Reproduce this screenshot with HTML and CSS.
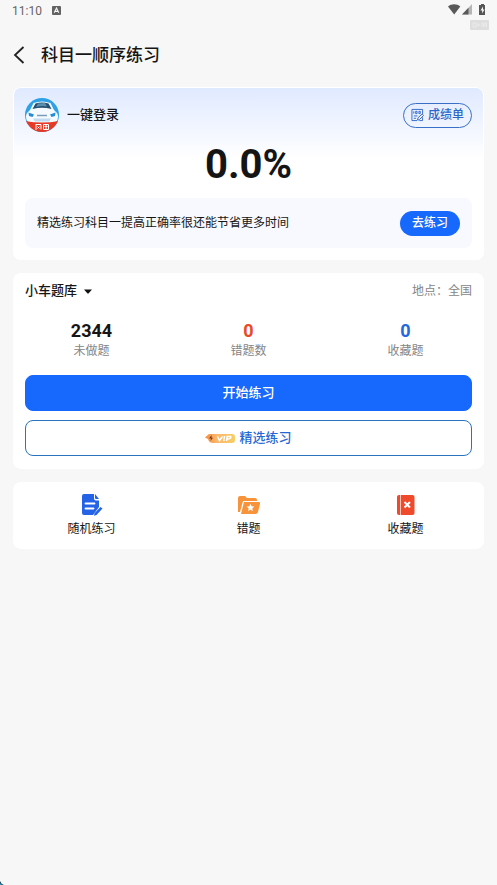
FILE: index.html
```html
<!DOCTYPE html>
<html lang="zh-CN">
<head>
<meta charset="utf-8">
<meta name="viewport" content="width=device-width, initial-scale=1">
<title>科目一顺序练习</title>
<link rel="stylesheet" href="styles.css">
</head>
<body>
<div class="status">
  <span class="time">11:10</span>
  <svg class="notice" width="9" height="9" viewBox="0 0 9 9" aria-hidden="true"><rect width="9" height="9" rx="1" fill="#636363"/><path d="M2.2 6.8 4.5 2l2.3 4.800M3.200 5.400h2.600" fill="none" stroke="#f7f7f7" stroke-width="1.100"/></svg>
  <div class="signals">
    <svg class="radio" width="38" height="11" viewBox="0 0 38 11" aria-hidden="true">
      <path d="M0 2.600C3.500-.5 8.800-.5 12.300 2.600L6.200 10.500Z" fill="#595959"/>
      <path d="M24 0v10.500H14Z" fill="#b5b5b5"/><path d="M20.500 3.700v6.800H14Z" fill="#595959"/>
      <path d="M33 0h3v1h1v10h-6V1h2Z" fill="#555"/><path d="m35 2.500-2.500 4h1.700v3l2.300-4h-1.500Z" fill="#f7f7f7"/>
    </svg>
    <svg width="19" height="10" viewBox="0 0 19 10" aria-hidden="true"><rect width="19" height="10" rx="1" fill="#dedede"/><path d="M3 3h3v4H3zM8 3v4M8 5h2M12 7V3h1.500v4M15 7V3h1.500v4" fill="none" stroke="#eaeaea"/></svg>
  </div>
</div>
<header class="bar">
  <button class="back" aria-label="返回"><svg width="12" height="18" viewBox="0 0 12 18" aria-hidden="true"><path d="M10.500 1 2 9l8.500 8" fill="none" stroke="#222" stroke-width="1.800"/></svg></button>
  <h1>科目一顺序练习</h1>
</header>
<main>
  <section class="card score">
    <div class="row">
      <a class="login" href="#login">
        <svg width="34" height="34" viewBox="0 0 34 34" aria-hidden="true">
          <defs><clipPath id="disc"><circle cx="17" cy="17" r="17"/></clipPath></defs>
          <g clip-path="url(#disc)">
            <path d="M0 0h34v34H0z" fill="#2ea1e6"/>
            <path d="M5 12 8.500 5Q17 2 25.500 5L29 12l3 3q2 3 0 8l-3 2H5l-3-2q-2-5 0-8Z" fill="#f5faff"/>
            <path d="m7.500 11 3-5.500Q17 3.500 23.500 5.500l3 5.500Q17 8.500 7.500 11Z" fill="#24506f"/>
            <path d="m11 9 2-3.500 7-.5 2 3.500Q17 7.500 11 9Z" fill="#5c8eb0"/>
            <path d="m3.500 14.500 5.500 2L7.500 19l-3.500-1ZM30.500 14.500l-5.500 2 1.500 2.500 3.500-1Z" fill="#278bd5"/>
            <path d="M12 17.500h10" stroke="#7d9cb7" stroke-width="1.500"/>
            <path d="M8 20.500h18l-2 3H10Z" fill="#c3dcef"/>
            <path d="M0 23q17 3 34 0v11H0Z" fill="#e63a26"/>
            <path d="M11 26.500h5v5M11 26v6M12.500 28.500l2 2M14.500 28.500l-2 2M18.500 26.500h5v5h-5zM21 27v4M19.500 28.500h3" fill="none" stroke="#fff"/>
          </g>
        </svg>
        <span>一键登录</span>
      </a>
      <a class="report" href="#report">
        <svg width="13" height="14" viewBox="0 0 14 14" fill="none" stroke="#2c66c9" aria-hidden="true"><path d="M12.500 6V1H1v12h5.500M12.500 9.500V13H9M3 3v2.500M5 3h1.500v2.500H5zM8.500 3H10v2.500H8.500zM3 8h4M3 10.500h2.500M7 12.500l.5-2.500L12 6l1.500 1.500-4.500 4.500Z"/></svg>
        <span>成绩单</span>
      </a>
    </div>
    <div class="rate">0.0%</div>
    <div class="tip"><p>精选练习科目一提高正确率很还能节省更多时间</p><button class="go">去练习</button></div>
  </section>
  <section class="card bank">
    <div class="row">
      <button class="choose">小车题库<svg width="8" height="5" viewBox="0 0 8 5" aria-hidden="true"><path d="M0 .5h8L4.500 4.500h-1Z" fill="#111"/></svg></button>
      <span class="place">地点：全国</span>
    </div>
    <dl class="thirds">
      <div><dd>2344</dd><dt>未做题</dt></div>
      <div><dd class="red">0</dd><dt>错题数</dt></div>
      <div><dd class="blue">0</dd><dt>收藏题</dt></div>
    </dl>
    <button class="wide">开始练习</button>
    <button class="wide outline">
      <svg width="30" height="11" viewBox="0 0 30 11" aria-hidden="true"><defs><linearGradient id="gold"><stop stop-color="#f58a3c"/><stop offset=".4" stop-color="#f9b96e"/><stop offset="1" stop-color="#f8cd65"/></linearGradient></defs><path d="M0 4.500 4 1h23q3 0 3 3v3q0 3-3 3H8Q4 10 3 6Z" fill="url(#gold)"/><path d="M6.500 2 4 5.500h2L5.500 8 8 4.700H6.500Z" fill="#7b3616"/><path d="m12.500 3.500 2 4 3-4M19.500 3l-.7 5M21.500 8l.7-4.500h3.500q1 2.500-3.700 2.500" fill="none" stroke="#fff" stroke-width="1.500"/></svg>
      <span>精选练习</span>
    </button>
  </section>
  <nav class="card thirds links">
    <a href="#random"><svg width="22" height="22" viewBox="0 0 22 22" aria-hidden="true"><path d="M3 0h10v4.500q0 2 2 2h3V13l-6 8H3q-2 0-2-2V2q0-2 2-2Z" fill="#2463e5"/><path d="m14 0 4 5h-3q-1 0-1-1ZM19.500 13l2 1.500-6 6.500-2.500.7.500-2.500Z" fill="#2463e5"/><path d="M4.500 9.500h9M4.500 14.500h8" stroke="#fff" stroke-width="1.800" stroke-linecap="round"/></svg><span>随机练习</span></a>
    <a href="#wrong"><svg width="22" height="22" viewBox="0 0 22 22" aria-hidden="true"><path d="M0 18V4q0-2 2-2h5l2 2h8q2 0 2 2v1H5L2 18Z" fill="#f7943b"/><path d="M6 8h15q1.500 0 1 2l-2 8q-.5 2-2.500 2H3Z" fill="#f7943b"/><path d="m12.500 9.800 1.100 2.500 2.700.3-2 1.800.5 2.700-2.300-1.400-2.400 1.400.6-2.700-2-1.800 2.700-.3Z" fill="#fff"/></svg><span>错题</span></a>
    <a href="#saved"><svg width="22" height="22" viewBox="0 0 22 22" aria-hidden="true"><path d="M4 1h13.500q2 0 2 2v16q0 2-2 2H4q-2 0-2-2V3q0-2 2-2Z" fill="#f04a2c"/><path d="M5.500 1v20" stroke="#ffc5b7"/><path d="m9.500 8 5.500 5.500M15 8l-5.500 5.500" stroke="#fff" stroke-width="2"/></svg><span>收藏题</span></a>
  </nav>
</main>
<svg class="corner" width="4" height="4" viewBox="0 0 4 4" aria-hidden="true"><path d="M0 0q1 3 4 4H0Z" fill="#12384a"/><path d="M0 2l2 2H0Z" fill="#2c9dc0"/></svg>
</body>
</html>
```
FILE: styles.css
```css
* { box-sizing: border-box; }
body {
  margin: 0;
  min-height: 100vh;
  background: #f7f7f7;
  color: #151515;
  font: 12px/16px Roboto, "Noto Sans CJK SC", sans-serif;
}
h1, p, dl, dd { margin: 0; }
button { font: inherit; color: inherit; border: 0; padding: 0; background: none; cursor: pointer; }
a { color: inherit; text-decoration: none; }
svg { display: block; flex: none; }

.status { display: flex; align-items: flex-start; height: 32px; padding: 4px 8px 0 12px; color: #666; }
.time { line-height: 14px; }
.notice { margin: 2px 0 0 10px; }
.signals { display: flex; flex-direction: column; align-items: flex-end; gap: 5px; margin-left: auto; }
.radio { margin-right: 3px; }

.bar { display: flex; align-items: center; gap: 16px; height: 46px; padding: 0 13px; }
.back { width: 12px; }
h1 { font-size: 17px; line-height: 24px; font-weight: 500; }

main { display: flex; flex-direction: column; gap: 13px; padding: 9px 13px; }
.card { padding: 12px; border-radius: 8px; background: #fff; }
.row { display: flex; align-items: center; justify-content: space-between; }

.score { background: linear-gradient(#dfe9ff, #fff 72px); box-shadow: inset 0 0 0 1px #fff; padding-top: 11px; }
.login { display: flex; align-items: center; gap: 8px; font-size: 13px; font-weight: 500; }
.report {
  display: flex; align-items: center; justify-content: center; gap: 4px;
  height: 25px; padding: 0 7px;
  border: 1px solid #3970c8; border-radius: 13px;
  color: #2c66c9; font-weight: 500;
}
.rate { margin: 9px 0; font-size: 40px; line-height: 48px; font-weight: 700; text-align: center; }
.tip {
  display: flex; align-items: center; justify-content: space-between; gap: 8px;
  min-height: 50px; padding: 0 12px; border-radius: 8px; background: #f7f9ff;
}
.go { flex: none; height: 25px; padding: 0 12px; border-radius: 13px; background: #1768fc; color: #fff; font-weight: 500; }

.bank { padding: 8px 12px 13px; }
.choose { display: flex; align-items: center; gap: 7px; font-size: 13px; line-height: 20px; font-weight: 500; }
.place, dt { color: #858585; }
.thirds { display: grid; grid-template-columns: repeat(3, 1fr); text-align: center; }
dl { margin: 0 -12px; padding: 20px 0 16px; }
dl > div { display: flex; flex-direction: column; gap: 2px; }
dd { font-size: 18px; line-height: 20px; font-weight: 700; }
.red { color: #eb4826; }
.blue { color: #2567df; }
.wide {
  display: flex; align-items: center; justify-content: center; gap: 4px;
  width: 100%; height: 36px; border: 1px solid #1768fc; border-radius: 8px;
  background: #1768fc; color: #fff; font-size: 13px; font-weight: 500;
}
.outline { margin-top: 9px; border-color: #2874bd; background: #fff; color: #2567d4; }

.links { padding: 12px 0; }
.links a { display: flex; flex-direction: column; align-items: center; gap: 5px; }
.corner { position: fixed; left: 0; bottom: 0; }
```
